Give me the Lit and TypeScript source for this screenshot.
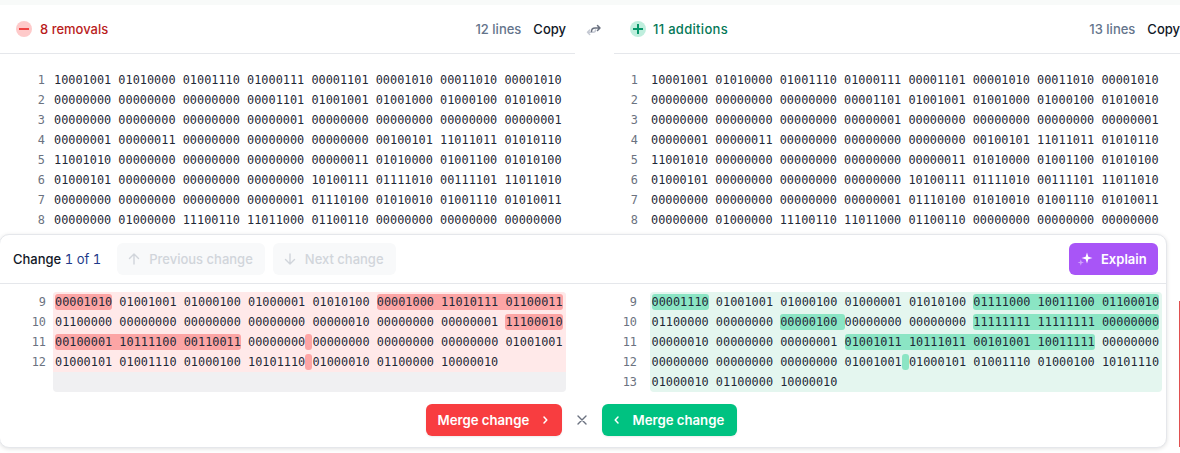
import { LitElement, html, css, svg } from "lit";
import { customElement } from "lit/decorators.js";

type Seg = string | [string];
const L_TOP = [
  "10001001 01010000 01001110 01000111 00001101 00001010 00011010 00001010",
  "00000000 00000000 00000000 00001101 01001001 01001000 01000100 01010010",
  "00000000 00000000 00000000 00000001 00000000 00000000 00000000 00000001",
  "00000001 00000011 00000000 00000000 00000000 00100101 11011011 01010110",
  "11001010 00000000 00000000 00000000 00000011 01010000 01001100 01010100",
  "01000101 00000000 00000000 00000000 10100111 01111010 00111101 11011010",
  "00000000 00000000 00000000 00000001 01110100 01010010 01001110 01010011",
  "00000000 01000000 11100110 11011000 01100110 00000000 00000000 00000000",
];
const L_CHG: Seg[][] = [
  [["00001010"], " 01001001 01000100 01000001 01010100 ", ["00001000 11010111 01100011"]],
  ["01100000 00000000 00000000 00000000 00000010 00000000 00000001 ", ["11100010"]],
  [["00100001 10111100 00110011"], " 00000000", [" "], "00000000 00000000 00000000 01001001"],
  ["01000101 01001110 01000100 10101110", [" "], "01000010 01100000 10000010"],
];
const R_CHG: Seg[][] = [
  [["00001110"], " 01001001 01000100 01000001 01010100 ", ["01111000 10011100 01100010"]],
  ["01100000 00000000 ", ["00000100 "], "00000000 00000000 ", ["11111111 11111111 00000000"]],
  ["00000010 00000000 00000001 ", ["01001011 10111011 00101001 10011111"], " 00000000"],
  ["00000000 00000000 00000000 01001001", [" "], "01000101 01001110 01000100 10101110"],
  ["01000010 01100000 10000010"],
];

const chev = (d: string) => svg`<svg width="12" height="12" viewBox="0 0 12 12" fill="none" stroke="currentColor" stroke-width="1.500" stroke-linecap="round" stroke-linejoin="round"><path d=${d}/></svg>`;

@customElement("app-root")
export class AppRoot extends LitElement {
  static styles = css`
    :host { display: block; position: relative; width: 1180px; height: 453px; overflow: hidden; background: #fff;
      font-family: Inter, "Noto Sans", sans-serif; font-size: 13px; color: #111827; }
    .band { height: 5px; background: #f8faf9; }
    .panes { display: grid; grid-template-columns: 575px 39px 575px; width: 1189px; }
    .head { height: 49px; box-sizing: border-box; border-bottom: 1px solid #e5e7eb; display: flex; align-items: center; padding: 0 9px 0 16px; font-weight: 500; }
    .badge { width: 16px; height: 16px; border-radius: 50%; display: flex; align-items: center; justify-content: center; margin-right: 8px; }
    .badge.del { background: #fecaca; color: #ef4444; }
    .badge.add { background: #bfeedd; color: #059669; margin-right: 7px; }
    .title.del { color: #b91c1c; }
    .title.add { color: #047857; letter-spacing: .3px; }
    .spacer { flex: 1; }
    .count { color: #64748b; margin-right: 12px; }
    .copy { color: #111827; }
    .swap { display: flex; align-items: flex-start; justify-content: center; padding-top: 17px; padding-right: 1px; }
    .swap .dark { stroke: #6b7280; }
    .swap .light { stroke: #c5c9d3; }
    .code { font-family: "DejaVu Sans Mono", monospace; font-size: 11.88px; line-height: 20px; color: #1f2937; }
    .lines { padding-top: 16px; }
    .row { display: flex; height: 20px; }
    .num { width: 45px; flex: none; text-align: right; color: #6b7280; box-sizing: border-box; }
    .txt, .ln { white-space: pre; }
    .pane.l .txt { margin-left: 9px; }
    .pane.r .num { width: 24px; }
    .pane.r .txt { margin-left: 13px; }
    .card { position: absolute; left: -1px; top: 234px; width: 1168px; height: 214px; box-sizing: border-box; background: #fff; border: 1px solid #e5e7eb; border-radius: 10px; box-shadow: 0 1px 4px rgba(0,0,0,.12); display: flex; flex-direction: column; }
    .bar { height: 49px; flex: none; box-sizing: border-box; border-bottom: 1px solid #e5e7eb; display: flex; align-items: center; padding: 0 8px 0 13px; }
    .chg { font-weight: 500; margin-right: 16px; }
    .chg span { color: #1e3a8a; font-weight: 400; font-variant-numeric: tabular-nums; }
    .nav { height: 32px; box-sizing: border-box; border-radius: 6px; background: #f8f9fa; color: #d1d5db; font-weight: 500; display: flex; align-items: center; gap: 8px; padding: 0 12px 0 10px; margin-right: 8px; }
    .explain { height: 32px; width: 89px; box-sizing: border-box; border-radius: 6px; background: #a855f7; color: #fff; font-weight: 600; display: flex; align-items: center; gap: 8px; padding-left: 8px; }
    .cols { display: grid; grid-template-columns: 597px 1fr; padding-top: 8px; }
    .col { display: flex; }
    .nums { width: 46px; flex: none; }
    .nums div { text-align: right; color: #6b7280; height: 20px; }
    .col.r .nums { width: 40px; }
    .body { margin-left: 7px; border-radius: 4px; overflow: hidden; width: 513px; height: 100px; }
    .col.l .body { background: #f0f0f2; }
    .col.r .body { background: #e4f6ef; margin-left: 13px; width: 512px; }
    .ln { height: 20px; padding-left: 2px; }
    .col.r .ln { padding-left: 1.500px; }
    .col.l .ln { background: #ffe9e9; }
    .hl { border-radius: 3px; padding: 1px 0; }
    .col.l .hl { background: #fca5a5; }
    .col.r .hl { background: #8be5c4; }
    .foot { display: flex; justify-content: center; align-items: center; position: absolute; left: 0; right: 0; top: 169px; padding-right: 4px; }
    .merge { height: 32px; box-sizing: border-box; border-radius: 6px; color: #fff; font-size: 13.200px; font-weight: 600; display: flex; align-items: center; box-shadow: 0 1px 2px rgba(0,0,0,.08); }
    .merge.del { background: #f83d40; width: 136px; padding-left: 12px; gap: 10px; }
    .merge.add { background: #00c281; width: 135px; padding-left: 9px; gap: 10px; }
    .x { width: 40px; display: flex; justify-content: center; color: #6b7280; }
    .edge { position: absolute; right: 0; top: 301px; width: 1px; height: 146px; background: #e05050; }
  `;

  seg(segs: Seg[]) {
    return segs.map((s) => typeof s === "string" ? s : html`<span class="hl">${s[0]}</span>`);
  }

  pane(side: "l" | "r", cls: string, title: string, count: string, icon: unknown) {
    return html`<div class="pane ${side}">
      <div class="head">
        <span class="badge ${cls}">${icon}</span>
        <span class="title ${cls}">${title}</span>
        <span class="spacer"></span>
        <span class="count">${count}</span>
        <span class="copy">Copy</span>
      </div>
      <div class="lines code">
        ${L_TOP.map((t, i) => html`<div class="row"><span class="num">${i + 1}</span><span class="txt">${t}</span></div>`)}
      </div>
    </div>`;
  }

  col(side: "l" | "r", rows: Seg[][]) {
    return html`<div class="col ${side} code">
      <div class="nums">${rows.map((_, i) => html`<div>${i + 9}</div>`)}</div>
      <div class="body">${rows.map((r) => html`<div class="ln">${this.seg(r)}</div>`)}</div>
    </div>`;
  }

  render() {
    const minus = svg`<svg width="10" height="10" viewBox="0 0 10 10"><path d="M0.500 5h9" stroke="currentColor" stroke-width="2" stroke-linecap="round"/></svg>`;
    const plus = svg`<svg width="10" height="10" viewBox="0 0 10 10"><path d="M0.500 5h9M5 0.500v9" stroke="currentColor" stroke-width="2" stroke-linecap="round"/></svg>`;
    return html`
      <div class="band"></div>
      <div class="panes">
        ${this.pane("l", "del", "8 removals", "12 lines", minus)}
        <div class="swap">
          <svg width="16" height="16" viewBox="0 0 16 16" fill="none" stroke-width="1.500" stroke-linecap="round" stroke-linejoin="round">
            <path class="light" d="M9.500 8C9.500 9.500 8.500 10.300 7 10.300H1.500M3.700 8 1.500 10.300 3.700 12.500"/>
            <path class="dark" d="M5.500 9.500C5.500 7 7 6 9 6H14M11.500 3.500 14 6 11.500 8.500"/>
          </svg>
        </div>
        ${this.pane("r", "add", "11 additions", "13 lines", plus)}
      </div>
      <div class="card">
        <div class="bar">
          <div class="chg">Change <span>1 of 1</span></div>
          <div class="nav">
            <svg width="14" height="14" viewBox="0 0 14 14" fill="none" stroke="currentColor" stroke-width="1.400" stroke-linecap="round" stroke-linejoin="round"><path d="M7 12V2M2.500 6.500 7 2l4.500 4.500"/></svg>
            Previous change
          </div>
          <div class="nav">
            <svg width="14" height="14" viewBox="0 0 14 14" fill="none" stroke="currentColor" stroke-width="1.400" stroke-linecap="round" stroke-linejoin="round"><path d="M7 2v10M2.500 7.500 7 12l4.500-4.500"/></svg>
            Next change
          </div>
          <span class="spacer"></span>
          <div class="explain">
            <svg width="16" height="16" viewBox="0 0 16 16" fill="#fff"><path d="M10 1.500l1.300 4.200 4.200 1.300-4.200 1.300L10 12.500 8.700 8.300 4.500 7l4.200-1.300z"/><path opacity=".45" d="M3.800 8.300l.8 2.400 2.400.8-2.400.8-.8 2.400-.8-2.400-2.400-.8 2.400-.8z"/></svg>
            Explain
          </div>
        </div>
        <div class="cols">
          ${this.col("l", L_CHG)}
          ${this.col("r", R_CHG)}
        </div>
        <div class="foot">
          <div class="merge del">Merge change ${chev("M5 3 7.800 6 5 9")}</div>
          <div class="x">
            <svg width="12" height="12" viewBox="0 0 12 12" fill="none" stroke="currentColor" stroke-width="1.400" stroke-linecap="round"><path d="M2 2l8 8M10 2l-8 8"/></svg>
          </div>
          <div class="merge add">${chev("M7 3 4.200 6 7 9")} Merge change</div>
        </div>
      </div>
      <div class="edge"></div>
    `;
  }
}
